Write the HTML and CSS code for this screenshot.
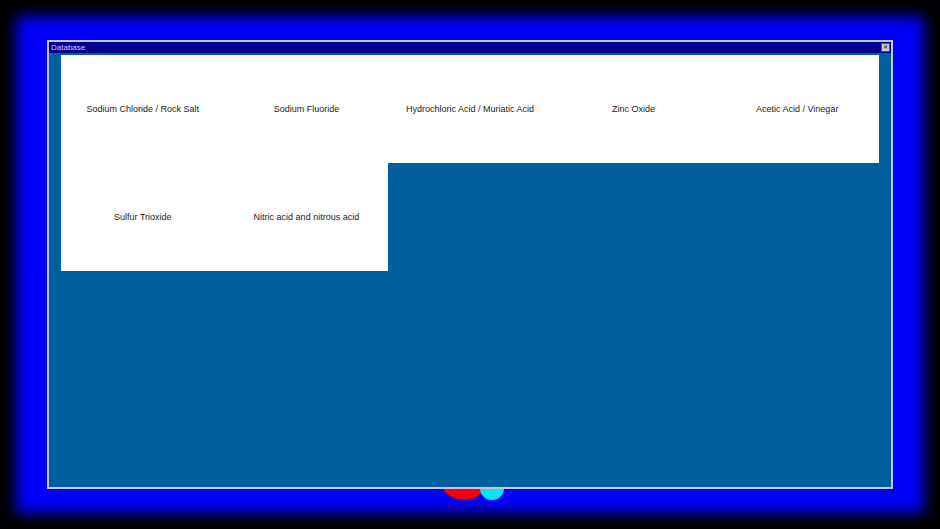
FILE: index.html
```html
<!DOCTYPE html>
<html lang="en">
  <head>
    <meta charset="UTF-8" />
    <title>Database</title>
    <link rel="stylesheet" href="styles.css">
  </head>
  <body>
    <div class="screen">
      <div class="blob red"></div>
      <div class="blob cyan"></div>
      <div class="window">
        <div class="titlebar">
          <span class="title">Database</span>
          <span class="close">&#x2715;</span>
        </div>
        <div class="content">
          <div class="grid">
            <div class="cell">Sodium Chloride / Rock Salt</div>
            <div class="cell">Sodium Fluoride</div>
            <div class="cell">Hydrochloric Acid / Muriatic Acid</div>
            <div class="cell">Zinc Oxide</div>
            <div class="cell">Acetic Acid / Vinegar</div>
            <div class="cell">Sulfur Trioxide</div>
            <div class="cell">Nitric acid and nitrous acid</div>
          </div>
        </div>
      </div>
    </div>
  </body>
</html>
```

FILE: styles.css
```css
* {
  margin: 0;
  padding: 0;
  box-sizing: border-box;
  font-family: "Liberation Sans", Arial, sans-serif;
}
body {
  background: #000;
  width: 940px;
  height: 529px;
  overflow: hidden;
}
.screen {
  position: relative;
  width: 940px;
  height: 529px;
  background: #0000f8;
  box-shadow: inset 0 0 14px 16px #000;
  padding: 40px 0 0 47px;
}
.blob {
  position: absolute;
  border-radius: 50%;
}
.red {
  left: 443px;
  top: 470px;
  width: 42px;
  height: 30px;
  background: #f40010;
}
.cyan {
  left: 480px;
  top: 477px;
  width: 24px;
  height: 23px;
  background: #00e8f0;
}
.window {
  position: relative;
  width: 846px;
  height: 449px;
  border: 1px solid #c4c4d4;
  padding: 1px;
  background: #c4c4d4;
  display: flex;
  flex-direction: column;
}
.titlebar {
  height: 11px;
  background: #00008c;
  display: flex;
  justify-content: space-between;
  align-items: center;
  padding: 0 1px 0 2px;
}
.title {
  font-size: 8px;
  color: #c8ccff;
  line-height: 11px;
}
.close {
  width: 9px;
  height: 9px;
  background: #c8c8d0;
  border: 1px solid #505060;
  color: #202020;
  font-size: 6px;
  line-height: 7px;
  text-align: center;
}
.content {
  flex: 1;
  background: #005f9f;
  padding: 2px 0 0 12px;
}
.grid {
  width: 818px;
  display: grid;
  grid-template-columns: repeat(5, 1fr);
  grid-auto-rows: 108px;
}
.cell {
  background: #fff;
  display: flex;
  justify-content: center;
  align-items: center;
  font-size: 9px;
  color: #222;
}
```
